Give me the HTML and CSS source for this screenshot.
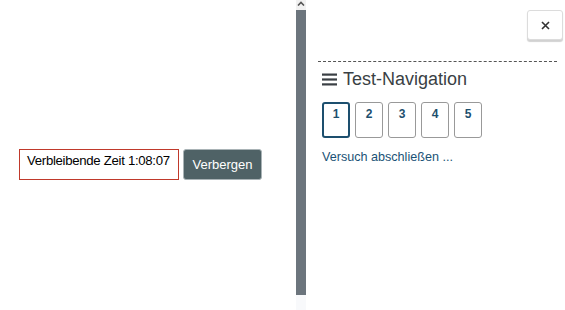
FILE: index.html
```html
<!DOCTYPE html>
<html lang="de">
<head>
<meta charset="utf-8">
<title>Test</title>
<link rel="stylesheet" href="styles.css">
</head>
<body>
<div class="page">
  <div class="left">
    <div class="timer-row">
      <div class="timer">Verbleibende Zeit 1:08:07</div>
      <button class="hide-btn">Verbergen</button>
    </div>
  </div>
  <div class="divider">
    <div class="div-top"><svg width="8" height="5" viewBox="0 0 8 5"><path d="M1 4.5 L4 1.5 L7 4.5" fill="none" stroke="#555" stroke-width="1.6"/></svg></div>
    <div class="div-bar"></div>
    <div class="div-bottom"></div>
  </div>
  <div class="right">
    <div class="close-row"><button class="close-btn" aria-label="Schließen"><svg width="9" height="9" viewBox="0 0 9 9"><path d="M1 1 L8 8 M8 1 L1 8" stroke="#333" stroke-width="1.6" fill="none"/></svg></button></div>
    <div class="nav">
      <h2 class="nav-title"><svg class="burger" width="15" height="13" viewBox="0 0 15 13"><rect x="0" y="0.5" width="15" height="2.2" fill="#3a3f44"/><rect x="0" y="5.4" width="15" height="2.2" fill="#3a3f44"/><rect x="0" y="10.3" width="15" height="2.2" fill="#3a3f44"/></svg>Test-Navigation</h2>
      <div class="pages">
        <button class="pg current">1</button>
        <button class="pg">2</button>
        <button class="pg">3</button>
        <button class="pg">4</button>
        <button class="pg">5</button>
      </div>
      <a class="finish" href="#">Versuch abschließen ...</a>
    </div>
  </div>
</div>
</body>
</html>
```
FILE: styles.css
```css
html, body {
  margin: 0;
  padding: 0;
  background: #fff;
}
body {
  font-family: "Liberation Sans", Arial, sans-serif;
}
.page {
  display: flex;
  width: 565px;
  height: 310px;
}
.left {
  width: 296px;
  flex: none;
  padding: 149px 0 0 19px;
  box-sizing: border-box;
}
.timer-row {
  display: flex;
  align-items: flex-start;
}
.timer {
  width: 160px;
  height: 31px;
  box-sizing: border-box;
  border: 1px solid #c0392b;
  padding: 2px 0 0 7px;
  font-size: 13.2px;
  letter-spacing: -0.3px;
  line-height: 17px;
  color: #000;
}
.hide-btn {
  margin-left: 4px;
  width: 79px;
  height: 31px;
  box-sizing: border-box;
  background: #4f6266;
  border: 1px solid #a9b3b6;
  border-radius: 3px;
  color: #fff;
  font-family: "Liberation Sans", Arial, sans-serif;
  font-size: 13px;
  padding: 0;
}
.divider {
  width: 10px;
  flex: none;
  display: flex;
  flex-direction: column;
}
.div-top {
  height: 10px;
  background: #f1f1f1;
  display: flex;
  justify-content: center;
  align-items: flex-start;
  padding-top: 1px;
  box-sizing: border-box;
}
.div-bar {
  flex: 1;
  background: #6c757d;
}
.div-bottom {
  height: 15px;
  background: #f8f9fb;
}
.right {
  flex: 1;
  padding: 10px 2px 0 12px;
  box-sizing: border-box;
}
.close-row {
  display: flex;
  justify-content: flex-end;
}
.close-btn {
  width: 36px;
  height: 30px;
  box-sizing: border-box;
  background: #fff;
  border: 1px solid #dcdcdc;
  border-radius: 3px;
  box-shadow: 0 2px 1px rgba(0,0,0,0.18);
  padding: 0;
  display: flex;
  align-items: center;
  justify-content: center;
}
.nav {
  margin-top: 21px;
  width: 239px;
  border-top: 1px dashed #555;
}
.nav-title {
  margin: 6px 0 0 4px;
  font-size: 18px;
  font-weight: normal;
  line-height: 22px;
  color: #3a3f44;
  display: flex;
  align-items: center;
}
.burger {
  margin-right: 6px;
}
.pages {
  display: flex;
  gap: 5px;
  margin: 12px 0 0 4px;
}
.pg {
  width: 28px;
  height: 36px;
  box-sizing: border-box;
  background: #fff;
  border: 1px solid #999;
  border-radius: 3px;
  padding: 4px 0 0;
  font-family: "Liberation Sans", Arial, sans-serif;
  font-size: 12px;
  font-weight: bold;
  color: #1d4f6e;
  display: flex;
  justify-content: center;
  align-items: flex-start;
}
.pg.current {
  border: 2px solid #1d4f6e;
  padding-top: 3px;
}
.finish {
  display: block;
  margin: 12px 0 0 4px;
  font-size: 12.6px;
  color: #1a5276;
  text-decoration: none;
}
```
